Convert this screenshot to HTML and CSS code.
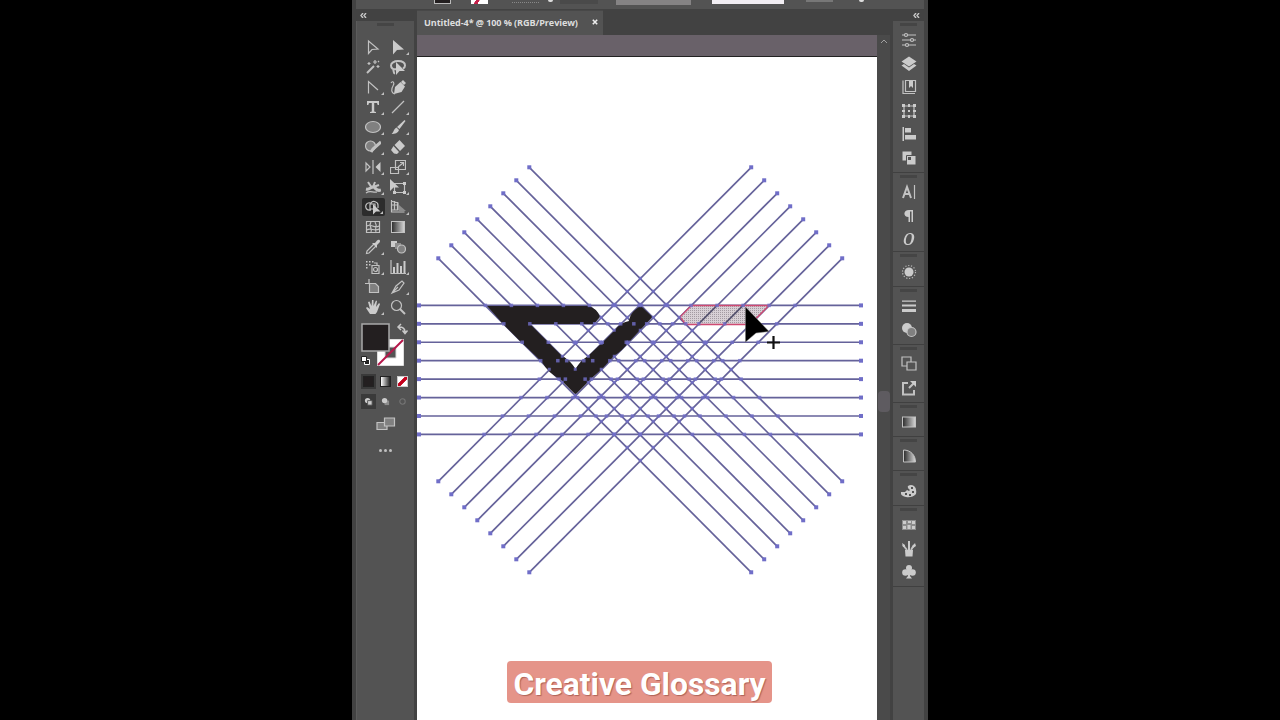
FILE: index.html
```html
<!DOCTYPE html>
<html lang="en">
<head>
    <meta charset="UTF-8">
    <title>Untitled-4</title>
    <link rel="stylesheet" href="styles.css">
</head>
<body>
    <div class="app">
        <div class="control-bar">
            <span class="control fill"></span>
            <span class="control stroke"></span>
            <span class="control dashes"></span>
            <span class="control knob"></span>
            <span class="control field"></span>
            <span class="control style"></span>
            <span class="control opacity"></span>
            <span class="control extra"></span>
            <span class="control knob last"></span>
        </div>
        <div class="workspace">
            <aside class="toolbox">
                <div class="collapse"><svg viewBox="0 0 7 5"><path d="M3 0L1 2.5 3 5M6 0L4 2.5 6 5"/></svg></div>
                <div class="tools-panel">
                    <div class="grip"></div>
                    <div class="tools">
                        <div class="tool"><svg viewBox="0 0 16 16"><path class="line" d="M3.500 2v12.500l3.500-4 6-.5z"/></svg></div>
                        <div class="tool more"><svg viewBox="0 0 16 16"><path d="M3 1v14.500l4-4.500 7-.5z"/></svg></div>
                        <div class="tool"><svg viewBox="0 0 16 16"><path class="thick" d="M2 14l7-7"/><path class="line" d="M10 1v4M8 3h4M13 6v3M11.500 7.500h3M4 3v3M2.500 4.500h3M14 2l-1 1"/></svg></div>
                        <div class="tool"><svg viewBox="0 0 16 16"><path class="thick" d="M7 10C3 11 1 9 1 6.500S4 2 8 2s7 1.500 7 4.500c0 1.500-1 2.500-2 3M4 10c-2 2 1 3 0 5"/><path d="M6 3v13l3.500-4h5.500z"/></svg></div>
                        <div class="tool more"><svg viewBox="0 0 16 16"><path class="line" d="M3.500 14.500v-12l9.500 8.500"/></svg></div>
                        <div class="tool"><svg viewBox="0 0 16 16"><path d="M4 15l1-7 5.500-5 4.500 4.500-3.500 5.500zM11 3l2-2 3 3-2 2z"/><path class="line" d="M1 4c2-3 4 0 2 3s-2 7 2 8"/></svg></div>
                        <div class="tool more"><svg viewBox="0 0 16 16"><path d="M2 2h12v4h-1.300l-.7-2H9.200v8.500l1.800.5v1H5v-1l1.800-.5V4H4l-.7 2H2z"/></svg></div>
                        <div class="tool more"><svg viewBox="0 0 16 16"><path class="line" d="M2 14L14 2"/></svg></div>
                        <div class="tool more"><svg viewBox="0 0 16 16"><ellipse class="round" cx="8" cy="8" rx="7.500" ry="5.500"/></svg></div>
                        <div class="tool more"><svg viewBox="0 0 16 16"><path d="M14.500 1l1 1-6 8-2.500-2zM6.500 8.500L9 11c-1 3-4 4-7.500 4 2-1 2-5 5-6.500z"/></svg></div>
                        <div class="tool more"><svg viewBox="0 0 16 16"><circle class="round" cx="5.500" cy="7" r="5"/><path class="heavy" d="M6 13l2-3 8-7"/></svg></div>
                        <div class="tool more"><svg viewBox="0 0 16 16"><path d="M9.500 1L15 7l-5 5-5.500-6zM3.500 7L9 13l-2 2-3-.5L1 11z"/></svg></div>
                        <div class="tool more"><svg viewBox="0 0 16 16"><path class="line" d="M1 4v8l4-4zM8 1v14"/><path d="M15.500 3v10L10.500 8z"/></svg></div>
                        <div class="tool more"><svg viewBox="0 0 16 16"><path class="line" d="M5.500 1.500h10v9h-10zM.500 8.500h8v6h-8zM8 8l5-4M10 3.500h3.500V7"/></svg></div>
                        <div class="tool more"><svg viewBox="0 0 16 16"><path class="heavy" d="M1 10c4 1 4-2 7-2s3 5 8 3"/><path class="thick" d="M3 3l4 6M10 3l-2 5 6-2"/><path class="line" d="M1 14c4-3 7 0 11-1"/></svg></div>
                        <div class="tool more"><svg viewBox="0 0 16 16"><path class="line" d="M4.500 4.500h10v9h-10z"/><path d="M13 3h3v3h-3zM13 12h3v3h-3zM3 12h3v3H3zM0 0v12l3.500-3.500H9z"/></svg></div>
                        <div class="tool more active"><svg viewBox="0 0 16 16"><path class="line" d="M6 11C2 12 0 9 1 6s5-2 5-2c2-3 7-1 7 2s0 3 0 3M5 5v5h5V5z"/><path d="M8 5v10.500l3-3h4.500z"/></svg></div>
                        <div class="tool more"><svg viewBox="0 0 16 16"><path class="line" d="M1.500 1v12h13M4.500 2v9M7.500 3v8M1 2l7 2v7H1M1 6h7"/><path class="dim" d="M9 6l7 6H9z"/></svg></div>
                        <div class="tool"><svg viewBox="0 0 16 16"><path class="line" d="M1.500 2.500h13v11h-13zM2 7c4-3 7 3 12 0M2 11c3-3 8 2 12-1M6 3c-3 4 2 7 0 10M10 3c3 4-1 7 1 10"/></svg></div>
                        <div class="tool"><svg viewBox="0 0 16 16"><rect class="edge" x="1.500" y="2.500" width="13" height="11" fill="url(#ramp)"/></svg></div>
                        <div class="tool more"><svg viewBox="0 0 16 16"><path class="line" d="M9 5L2 12l-.500 2.500L4 14l7-7"/><path d="M7 4l3 0 2-2.500c2-2 4 0 2.500 2L12 6v3z"/></svg></div>
                        <div class="tool"><svg viewBox="0 0 16 16"><path d="M1 2h6v6H1z"/><path class="dim" d="M5 4h6v6H5z"/><circle class="round" cx="11.500" cy="10" r="4"/></svg></div>
                        <div class="tool more"><svg viewBox="0 0 16 16"><path class="line" d="M7 6.500h7v8H7zM9 4h3v2"/><circle class="line" cx="10.500" cy="10.500" r="2"/><path d="M1 2h1.500v1.500H1zM4 2h1.500v1.500H4zM7 2h1.500v1.500H7zM1 5h1.500v1.500H1zM4 5h1.500v1.500H4zM1 8h1.500v1.500H1z"/></svg></div>
                        <div class="tool more"><svg viewBox="0 0 16 16"><path class="line" d="M1 1v13.500h15"/><path d="M3 8h2v6H3zM6.500 4h2v10h-2zM10 7h2v7h-2zM13.500 2h2v12h-2z"/></svg></div>
                        <div class="tool"><svg viewBox="0 0 16 16"><path class="line" d="M4 0v4M0 4.500h4"/><path class="round" d="M4.500 4.500h6l3 3v6h-9z"/></svg></div>
                        <div class="tool more"><svg viewBox="0 0 16 16"><path class="line" d="M2 14L6 7l6-5 2 2-5 7zM2 14l6-6"/></svg></div>
                        <div class="tool more"><svg viewBox="0 0 16 16"><path d="M5 15L1 9l1-1 3 2-2-7 1.500-.5L6.500 7 7 1h1.500v6L11 1.500l1 .5-1 6 3-4 1 1-3 8-1.500 2z"/></svg></div>
                        <div class="tool"><svg viewBox="0 0 16 16"><circle class="line" cx="6.500" cy="6.500" r="5"/><path class="thick" d="M10 10l5 5"/></svg></div>
                    </div>
                    <div class="swatches">
                        <svg viewBox="0 0 52 46">
                            <path class="none-ring" d="M17.500 17.500h26v26h-26zM25 25v11h11V25z"/>
                            <path class="none-slash" d="M18 43L43 18"/>
                            <rect class="fill-box" x="2" y="2" width="27" height="27"/>
                            <path class="swap" d="M39 5q6 0 6 5M41 2l-3 3 3 3M42.500 8.500l2.500 3 2.500-3"/>
                            <path class="default-fill" d="M4.500 37.500h5v5h-5z"/>
                            <path class="default-stroke" d="M1.500 34.500h5v5h-5z"/>
                        </svg>
                    </div>
                    <div class="mini-row">
                        <span class="mini on"><i class="solid"></i></span>
                        <span class="mini"><i class="ramp"></i></span>
                        <span class="mini"><i class="none"></i></span>
                    </div>
                    <div class="mini-row modes">
                        <span class="mini on"><svg viewBox="0 0 10 10"><circle cx="4" cy="4" r="3"/><path class="cut" d="M4 4h5v5H4z"/></svg></span>
                        <span class="mini"><svg viewBox="0 0 10 10"><path class="dim" d="M4 4h5v5H4z"/><circle cx="4" cy="4" r="3"/></svg></span>
                        <span class="mini off"><svg viewBox="0 0 10 10"><circle class="line" cx="5" cy="5" r="3"/></svg></span>
                    </div>
                    <div class="screen-mode"><svg viewBox="0 0 20 14"><path class="round" d="M1 5.500h10v7H1z"/><path class="round" d="M8.500 1h10v8h-10z"/></svg></div>
                    <div class="dots"><i></i><i></i><i></i></div>
                </div>
            </aside>

            <main class="document">
                <div class="tabs">
                    <div class="tab"><span class="tab-name">Untitled-4* @ 100 % (RGB/Preview)</span><svg viewBox="0 0 6 6"><path d="M.800.800l4.400 4.400M5.200.800L.800 5.200"/></svg></div>
                </div>
                <div class="view">
                    <div class="canvas">
                        <div class="pasteboard"></div>
                        <svg class="artboard" viewBox="417 57 460 663">
                            <defs>
                                <pattern id="mesh" width="2" height="2" patternUnits="userSpaceOnUse">
                                    <rect width="2" height="2" fill="#d8d0d6"/>
                                    <rect width="1" height="1" fill="#a39aa2"/>
                                </pattern>
                            </defs>
                            <g id="guides"></g>
                            <path class="mark" d="M487 306L588 306Q597 308 600 317L594 324 530 324 547 341 561 355Q571 361 575.500 369Q580 361 588 356L604 341 615 330Q620 323 629 321Q630 314 635 310L640.500 305.500L652.500 317 642 328 628 343Q623 350 614 356L602 369 594 376 575.500 394.500 560 379Q548 373 542 362L520 341 504 325z"/>
                            <path class="region" d="M691.500 305.500H769L750 324.500H686L680 317z"/>
                            <g id="overlay"></g>
                            <g id="anchors"></g>
                            <path class="cursor" d="M745.500 307v35l10.500-9 13-1.500z"/>
                            <path class="plus" d="M767 342.500h13M773.500 336v13"/>
                        </svg>
                        <div class="caption">Creative Glossary</div>
                    </div>
                    <div class="scrollbar">
                        <svg viewBox="0 0 8 5"><path d="M1 4l3-3 3 3"/></svg>
                        <div class="thumb"></div>
                    </div>
                </div>
            </main>

            <aside class="dock">
                <div class="collapse"><svg viewBox="0 0 7 5"><path d="M3 0L1 2.5 3 5M6 0L4 2.5 6 5"/></svg></div>
                <div class="group">
                    <svg viewBox="0 0 16 16"><path class="line" d="M1 3h14M1 8h14M1 13h14"/><circle class="knot" cx="5" cy="3" r="1.500"/><circle class="knot" cx="11" cy="8" r="1.500"/><circle class="knot" cx="6" cy="13" r="1.500"/></svg>
                    <svg viewBox="0 0 16 16"><path d="M8 .500l7.500 5L8 10.500.500 5.500zM.500 9.500L3 8l5 3.500L13 8l2.500 1.500L8 15z"/></svg>
                    <svg viewBox="0 0 16 16"><path class="line" d="M4.500 1.500h10v11h-10zM2 1.500v13h12"/><path d="M8 2h4v7L10 7 8 9z"/></svg>
                    <svg viewBox="0 0 16 16"><path class="line" d="M3 3h10v10H3z"/><path d="M1 1h3v3H1zM12 1h3v3h-3zM1 12h3v3H1zM12 12h3v3h-3zM7 1h2v3H7zM7 12h2v3H7zM1 7h3v2H1zM12 7h3v2h-3zM7 7h2v2H7z"/></svg>
                    <svg viewBox="0 0 16 16"><path d="M1.500 1h1.500v14H1.500zM4 2h6v4.500H4zM4 9h11v4.500H4z"/></svg>
                    <svg viewBox="0 0 16 16"><path d="M1.500 1.500h9v9h-9z"/><path class="cut" d="M5.500 5.500h9.500v9.500H5.500z"/><path class="hole" d="M7 7h3v3H7z"/></svg>
                </div>
                <div class="group type">
                    <svg viewBox="0 0 16 16"><path class="thick" d="M2 14L6 3l4 11M4 10h5"/><path class="line" d="M13.500 1v14"/></svg>
                    <svg viewBox="0 0 16 16"><path d="M8 2h4v12h-1.500V3.500H9V14H7.500V9C2 9 2 2 8 2z"/></svg>
                    <svg viewBox="0 0 16 16"><path d="M9 2c3 0 5 2 4 6s-3 6-6 6-5-2-4-6 3-6 6-6zM9 3C7 3 5.500 5 5 8s0 5 2 5 3-2 3.500-5S11 3 9 3z" fill-rule="evenodd"/></svg>
                </div>
                <div class="group">
                    <svg viewBox="0 0 16 16"><circle cx="8" cy="8" r="4.500"/><circle class="rays" cx="8" cy="8" r="6.500"/></svg>
                </div>
                <div class="group">
                    <svg viewBox="0 0 16 16"><path d="M1 2.500h14v1.300H1zM1 6.500h14v2H1zM1 11h14v3H1z"/></svg>
                    <svg viewBox="0 0 16 16"><circle cx="6" cy="6" r="5"/><circle class="round" cx="10.500" cy="10" r="4.500"/></svg>
                </div>
                <div class="group">
                    <svg viewBox="0 0 16 16"><path class="line" d="M1 1h9v9H1z"/><path class="round bare" d="M6 6h9v8H6z"/></svg>
                    <svg viewBox="0 0 16 16"><path class="thick" d="M7 3H2v11.500h11V10M8 8l6-6"/><path d="M9 1h6v6z"/></svg>
                </div>
                <div class="group">
                    <svg viewBox="0 0 16 16"><rect class="edge" x="1.500" y="3" width="13" height="10" fill="url(#ramp)"/></svg>
                </div>
                <div class="group">
                    <svg viewBox="0 0 16 16"><path class="edge" fill="url(#ramp)" d="M2.500 2v12h12c0-7-5-12-12-12z"/></svg>
                </div>
                <div class="group">
                    <svg viewBox="0 0 16 16"><path d="M7 3q3-2 6 0t2 8q-4 4-10 3t-5-5h4l2-2 2 1 1-1q-3-2-2-4z"/><path class="hole" d="M4 10h2v2H4zM8 11h2v2H8zM11 8h2v2h-2zM10 4h2v2h-2z"/></svg>
                </div>
                <div class="group">
                    <svg viewBox="0 0 16 16"><path class="dim" d="M1 3h14v10H1z"/><path d="M2 4h3v3H2zM11 4h3v3h-3zM6.500 8h3v4h-3zM2 9h3v3H2zM11 9h3v3h-3zM7 4h3v2H7z"/></svg>
                    <svg viewBox="0 0 16 16"><path d="M4 9h8l-.500 6.500h-7zM7 0h2v9H7z"/><path class="thick" d="M6 9L2 4M10 9l3-5"/><path d="M1 2l3 2v2L2 6zM14 2l1 3-3 2-.5-2z"/></svg>
                    <svg viewBox="0 0 16 16"><circle cx="8" cy="4" r="3"/><circle cx="4.500" cy="8.500" r="3.300"/><circle cx="11.500" cy="8.500" r="3.300"/><path d="M7 6h2v6l2 2.500H5L7 12z"/></svg>
                </div>
            </aside>
        </div>
    </div>

    <svg class="defs" width="0" height="0">
        <defs>
            <linearGradient id="ramp">
                <stop offset="0" stop-color="#2a2a2a"/>
                <stop offset="1" stop-color="#d8d8d8"/>
            </linearGradient>
        </defs>
    </svg>

    <script>
        const SVG_NS = 'http://www.w3.org/2000/svg';
        const COUNT = 8;
        const guides = document.getElementById('guides');
        const overlay = document.getElementById('overlay');
        const anchors = document.getElementById('anchors');

        const rows = [];
        const falling = [];
        const rising = [];

        for (let i = 0; i < COUNT; i++) {
          const d = i * 13;
          rows.push(305.4 + i * 18.43);
          falling.push(180 + i * 26);
          rising.push(918.5 + i * 26);
          addLine(guides, 419, rows[i], 861, rows[i], 'guide');
          addLine(guides, 438.3 + d, 258.3 - d, 751.2 + d, 572.3 - d, 'guide');
          addLine(guides, 751.2 + d, 167.3 + d, 438.3 + d, 481.3 + d, 'guide');
          addAnchor(419, rows[i], 4);
          addAnchor(861, rows[i], 4);
          addAnchor(438.3 + d, 258.3 - d, 4);
          addAnchor(751.2 + d, 572.3 - d, 4);
          addAnchor(751.2 + d, 167.3 + d, 4);
          addAnchor(438.3 + d, 481.3 + d, 4);
        }

        // strokes that stay visible above the hovered region
        [4, 5].forEach(j => {
          addLine(overlay, rising[j] - rows[0], rows[0], rising[j] - rows[1], rows[1], 'guide over');
        });

        falling.forEach(f => {
          rows.forEach(y => addAnchor(f + y, y, 3.5, 'soft'));
          rising.forEach(r => addAnchor((f + r) / 2, (r - f) / 2, 3, 'soft'));
        });
        rising.forEach(r => {
          rows.forEach(y => addAnchor(r - y, y, 3.5, 'soft'));
        });

        function addLine(parent, x1, y1, x2, y2, name) {
          const line = document.createElementNS(SVG_NS, 'line');
          line.setAttribute('x1', x1);
          line.setAttribute('y1', y1);
          line.setAttribute('x2', x2);
          line.setAttribute('y2', y2);
          line.setAttribute('class', name);
          parent.appendChild(line);
        }

        function addAnchor(x, y, size, name = '') {
          const rect = document.createElementNS(SVG_NS, 'rect');
          rect.setAttribute('x', x - size / 2);
          rect.setAttribute('y', y - size / 2);
          rect.setAttribute('width', size);
          rect.setAttribute('height', size);
          rect.setAttribute('class', 'anchor ' + name);
          anchors.appendChild(rect);
        }
    </script>
</body>
</html>
```
FILE: styles.css
```css
body {
    margin: 0;
    height: 720px;
    overflow: hidden;
    background: #000;
    display: flex;
    justify-content: center;
    font-family: "Open Sans", "Noto Sans", sans-serif;
}

svg {
    display: block;
    fill: #cbcbcb;
}

.defs {
    position: absolute;
}

.line, .thick, .heavy, .round, .knot {
    fill: none;
    stroke: #c2c2c2;
    stroke-width: 1.2;
}

.thick {
    stroke-width: 2;
}

.heavy {
    stroke-width: 3;
}

.round {
    fill: #808080;
}

.bare, .knot {
    fill: #535353;
}

.dim {
    fill: #8c8c8c;
}

.edge {
    stroke: #c2c2c2;
}

.cut {
    stroke: #535353;
}

.hole {
    fill: #535353;
}

.rays {
    fill: none;
    stroke: #b5b5b5;
    stroke-width: 1.2;
    stroke-dasharray: 1.2 1.7;
}

.app {
    width: 576px;
    height: 720px;
    display: flex;
    flex-direction: column;
    background: #424242;
}

.control-bar {
    height: 9px;
    margin: 0 4px 1px 4px;
    background: #535353;
    display: flex;
    align-items: flex-start;
    overflow: hidden;
}

.control {
    height: 4px;
    box-sizing: border-box;
}

.fill {
    width: 17px;
    margin-left: 78px;
    background: #231f20;
    border: 1px solid #bbb;
    border-top: 0;
}

.stroke {
    width: 17px;
    margin-left: 20px;
    background: linear-gradient(120deg, #fff 25%, #c3204a 26%, #c3204a 45%, #fff 46%);
}

.dashes {
    width: 27px;
    height: 3px;
    margin-left: 24px;
    border-bottom: 1px dotted #888;
}

.knob {
    width: 5px;
    height: 2px;
    margin-left: 9px;
    background: #ddd;
    border-radius: 0 0 3px 3px;
}

.field {
    width: 38px;
    margin-left: 7px;
    background: #4a4a4a;
}

.style {
    width: 75px;
    height: 5px;
    margin-left: 18px;
    background: #858384;
}

.opacity {
    width: 72px;
    margin-left: 21px;
    background: #f2eef3;
}

.extra {
    width: 27px;
    height: 2px;
    margin-left: 22px;
    background: #777;
}

.last {
    margin-left: 26px;
}

.workspace {
    flex: 1;
    min-height: 0;
    display: flex;
}

.collapse {
    height: 11px;
    display: flex;
    align-items: center;
}

.collapse svg {
    width: 7px;
    height: 5px;
    fill: none;
    stroke: #c8c8c8;
    stroke-width: 1.4;
}

.toolbox {
    width: 58px;
    margin-left: 4px;
    margin-right: 3px;
    display: flex;
    flex-direction: column;
}

.toolbox .collapse {
    padding-left: 4px;
}

.tools-panel {
    flex: 1;
    background: #535353;
    display: flex;
    flex-direction: column;
    align-items: center;
    border-left: 1px solid #5c5c5c;
}

.grip {
    width: 17px;
    height: 3px;
    margin-top: 2px;
    background: #454545;
}

.tools {
    margin-top: 11px;
    display: grid;
    grid-template-columns: 25px 25px;
    grid-auto-rows: 20px;
}

.tool {
    display: flex;
    align-items: center;
    justify-content: center;
    position: relative;
}

.tool svg {
    width: 16px;
    height: 16px;
}

.active {
    background: #2c2c2c;
    border-radius: 2px;
    height: 18px;
    align-self: center;
    margin: 0 1px;
}

.more::after {
    content: "";
    position: absolute;
    right: 2px;
    bottom: 2px;
    border-left: 3px solid transparent;
    border-bottom: 3px solid #c0c0c0;
}

.swatches {
    width: 52px;
    height: 46px;
    margin-top: 5px;
}

.none-ring {
    fill: #fff;
    fill-rule: evenodd;
    stroke: #ddd;
}

.none-slash {
    stroke: #b5174a;
    stroke-width: 2;
}

.fill-box {
    fill: #231f20;
    stroke: #a9a9a9;
    stroke-width: 1.5;
}

.swap {
    fill: none;
    stroke: #c8c8c8;
    stroke-width: 1.5;
}

.default-fill {
    fill: #222;
    stroke: #fff;
}

.default-stroke {
    fill: #fff;
    stroke: #222;
}

.mini-row {
    display: flex;
    margin-top: 6px;
    gap: 2px;
}

.mini {
    width: 15px;
    height: 15px;
    display: flex;
    align-items: center;
    justify-content: center;
}

.mini.on {
    background: #3a3a3a;
}

.mini i {
    width: 11px;
    height: 11px;
    box-sizing: border-box;
    border: 1px solid #222;
}

.mini svg {
    width: 9px;
    height: 9px;
}

.solid {
    background: #231f20;
}

.ramp {
    background: linear-gradient(90deg, #fff, #222);
}

.mini .none {
    border-color: #ccc;
    background: linear-gradient(135deg, #fff 38%, #c4001c 39%, #c4001c 61%, #fff 62%);
}

.modes {
    margin-top: 5px;
}

.off {
    opacity: 0.3;
}

.screen-mode {
    margin-top: 8px;
}

.screen-mode svg {
    width: 20px;
    height: 14px;
}

.dots {
    display: flex;
    gap: 2px;
    margin-top: 18px;
}

.dots i {
    width: 3px;
    height: 3px;
    border-radius: 50%;
    background: #c0c0c0;
}

.document {
    width: 473px;
    display: flex;
    flex-direction: column;
}

.tabs {
    height: 25px;
    display: flex;
}

.tab {
    width: 186px;
    box-sizing: border-box;
    padding: 0 5px 2px 7px;
    background: #535353;
    display: flex;
    align-items: center;
    justify-content: space-between;
    border-top: 1px solid #484848;
}

.tab-name {
    font-size: 9.1px;
    font-weight: 700;
    letter-spacing: -0.09px;
    color: #dedede;
    white-space: nowrap;
}

.tab svg {
    width: 6px;
    height: 6px;
    stroke: #eee;
    stroke-width: 1.6;
}

.view {
    flex: 1;
    display: flex;
}

.canvas {
    width: 460px;
    position: relative;
}

.pasteboard {
    height: 21px;
    background: #696169;
    border-bottom: 1px solid #222;
}

.artboard {
    width: 460px;
    height: 663px;
    background: #fff;
}

.guide {
    stroke: #65629a;
    stroke-width: 1.7;
}

.over {
    stroke: #55526f;
}

.anchor {
    fill: #706ec8;
}

.soft {
    opacity: 0.8;
}

.mark {
    fill: #231f20;
}

.region {
    fill: url(#mesh);
    stroke: #cf4a72;
    stroke-width: 1.3;
}

.cursor {
    fill: #000;
    stroke: #777;
    stroke-width: 0.5;
}

.plus {
    stroke: #111;
    stroke-width: 2.2;
}

.caption {
    position: absolute;
    left: 90px;
    bottom: 17px;
    width: 265px;
    height: 42px;
    border-radius: 4px;
    background: #e59489;
    color: #fff;
    font: bold 31.8px/46px Roboto, sans-serif;
    text-align: center;
    white-space: nowrap;
    text-shadow: 1px 1px 1px rgba(120, 50, 40, 0.5);
}

.scrollbar {
    width: 13px;
    background: #4a4a4a;
    display: flex;
    flex-direction: column;
    align-items: center;
}

.scrollbar svg {
    width: 8px;
    height: 5px;
    margin-top: 4px;
    fill: none;
    stroke: #a0a0a0;
}

.thumb {
    width: 12px;
    height: 21px;
    margin-top: 347px;
    border-radius: 4px;
    background: #5e5b60;
}

.dock {
    width: 31px;
    margin-left: 3px;
    display: flex;
    flex-direction: column;
    background: #535353;
}

.dock .collapse {
    background: #424242;
    justify-content: flex-end;
    padding-right: 4px;
}

.group {
    display: flex;
    flex-direction: column;
    align-items: center;
    padding: 7.5px 0 2.4px;
    border-bottom: 1px solid #404040;
    background: linear-gradient(#454545, #454545) center 2px / 17px 3px no-repeat;
}

.group svg {
    width: 16px;
    height: 16px;
    margin: 3.75px 0;
}

.type {
    padding-bottom: 0.6px;
}
```
